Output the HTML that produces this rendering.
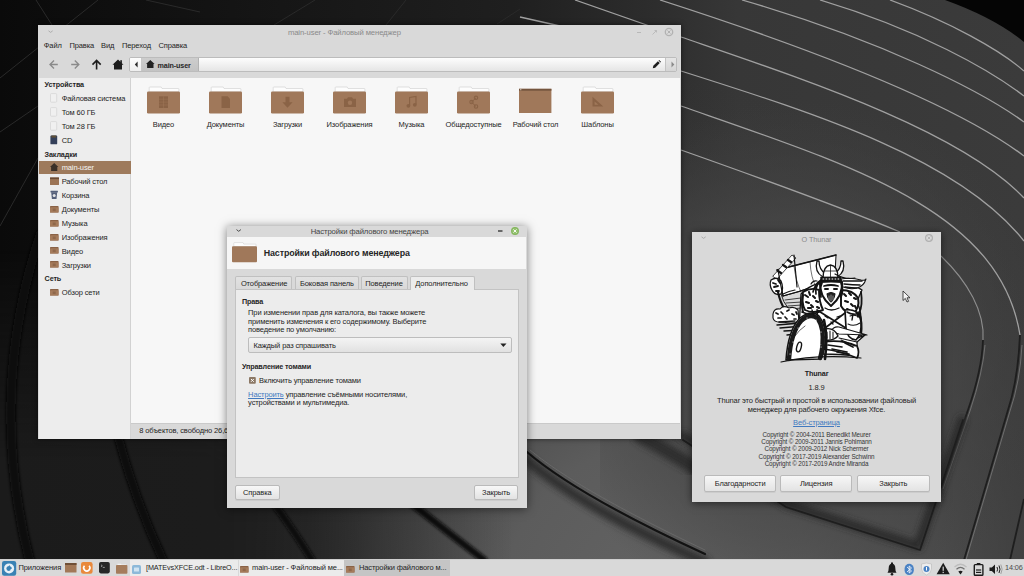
<!DOCTYPE html>
<html><head><meta charset="utf-8">
<style>
*{margin:0;padding:0;box-sizing:border-box}
html,body{width:1024px;height:576px;overflow:hidden;background:#111}
body{position:relative;font-family:"Liberation Sans",sans-serif;font-size:7.5px;letter-spacing:-0.12px;color:#242424}
.a{position:absolute}
.t{position:absolute;white-space:nowrap;line-height:10px}
svg{position:absolute;overflow:visible}
.btn{position:absolute;border:1px solid #bababa;border-radius:2px;background:linear-gradient(#f7f7f7,#e3e3e3);box-shadow:0 1px 0 rgba(0,0,0,.06)}
.lnk{color:#4279c0;text-decoration:underline}
</style></head><body>

<svg id="wall" width="1024" height="576" viewBox="0 0 1024 576" style="left:0;top:0">
  <defs>
    <linearGradient id="bg" x1="0" y1="0" x2="1024" y2="0" gradientUnits="userSpaceOnUse">
      <stop offset="0" stop-color="#0a0a0a"/>
      <stop offset="0.06" stop-color="#0d0d0d"/>
      <stop offset="0.25" stop-color="#151515"/>
      <stop offset="0.5" stop-color="#1f1f1f"/>
      <stop offset="0.64" stop-color="#2d2d2d"/>
      <stop offset="0.72" stop-color="#373737"/>
      <stop offset="1" stop-color="#3b3b3b"/>
    </linearGradient>
    <radialGradient id="br" cx="660" cy="600" r="520" gradientUnits="userSpaceOnUse">
      <stop offset="0" stop-color="#636363"/>
      <stop offset="0.3" stop-color="#5c5c5c"/>
      <stop offset="0.55" stop-color="#4e4e4e" stop-opacity="0.85"/>
      <stop offset="0.8" stop-color="#404040" stop-opacity="0.35"/>
      <stop offset="1" stop-color="#3a3a3a" stop-opacity="0"/>
    </radialGradient>
    <linearGradient id="lb" x1="0" y1="0" x2="1024" y2="0" gradientUnits="userSpaceOnUse">
      <stop offset="0" stop-color="#1b1b1b"/>
      <stop offset="0.2" stop-color="#1c1c1c" stop-opacity="1"/>
      <stop offset="0.3" stop-color="#222" stop-opacity="0.8"/>
      <stop offset="0.5" stop-color="#333" stop-opacity="0"/>
    </linearGradient>
    <linearGradient id="lbv" x1="0" y1="250" x2="0" y2="460" gradientUnits="userSpaceOnUse">
      <stop offset="0" stop-color="#fff" stop-opacity="0"/>
      <stop offset="1" stop-color="#fff" stop-opacity="1"/>
    </linearGradient>
    <mask id="lbm" maskUnits="userSpaceOnUse" x="0" y="0" width="1024" height="576"><rect x="0" y="250" width="520" height="326" fill="url(#lbv)"/></mask>
    <radialGradient id="mid" cx="800" cy="360" r="260" gradientUnits="userSpaceOnUse">
      <stop offset="0" stop-color="#4c4c4c" stop-opacity="1"/>
      <stop offset="0.55" stop-color="#474747" stop-opacity="0.7"/>
      <stop offset="1" stop-color="#404040" stop-opacity="0"/>
    </radialGradient>
    <filter id="bl1" x="-20%" y="-20%" width="140%" height="140%"><feGaussianBlur stdDeviation="1.6"/></filter>
    <filter id="bl2" x="-20%" y="-20%" width="140%" height="140%"><feGaussianBlur stdDeviation="3"/></filter>
  </defs>
  <rect width="1024" height="576" fill="url(#bg)"/>
  <rect x="0" y="0" width="1024" height="576" fill="url(#br)"/>
  <rect x="0" y="250" width="520" height="326" fill="url(#lb)" mask="url(#lbm)"/>
  <rect x="600" y="100" width="424" height="476" fill="url(#mid)"/>
  <g fill="none" stroke="#2a2a2a" stroke-width="1">
    <path d="M36 0 L52 25"/>
    <path d="M98 0 L0 78"/>
    <path d="M0 132 L38 106"/>
    <path d="M0 226 L38 158"/>
    <path d="M146 0 L200 12"/>
    <path d="M315 0 L274 25"/>
    <path d="M406 0 L386 25"/>
    <path d="M520 9 L497 24"/>
  </g>
  <!-- black corner top right -->
  <path d="M945 0 Q995 18 1024 42 L1024 0 Z" fill="#050505"/>
  <!-- light curves top right -->
  <g fill="none" stroke="#a0a0a0" stroke-width="1.3">
    <path d="M890 0 C950 22 1000 50 1024 71"/>
    <path d="M820 0 C920 30 990 70 1024 96"/>
    <path d="M742 0 C880 40 980 90 1024 122"/>
    <path d="M660 0 C800 45 950 100 1024 156"/>
    <path d="M575 0 L681 37 C800 78 960 130 1024 198"/>
    <path d="M681 71 C820 115 960 160 1024 241"/>
    <path d="M681 106 C850 165 1000 210 1020 335"/>
    <path d="M681 150 C780 185 860 215 900 232"/>
    <path d="M520 17 L560 26"/>
  </g>
  <g fill="none" stroke="#8e8e8e" stroke-width="1.1">
    <path d="M941 256 C968 282 985 312 983 340"/>
  </g>
  <g fill="none" stroke="#1e1e1e" stroke-width="1.8">
    <path d="M983 340 Q982 370 968 410 L941 488"/>
    <path d="M1020 335 Q1018 380 1008 410 L964 560"/>
    <path d="M1024 499 L1010 560"/>
  </g>
  <g fill="none" stroke="#7a7a7a" stroke-width="0.8">
    <path d="M985 345 Q983 372 970 411 L943 489"/>
    <path d="M1022 345 Q1020 382 1010 411 L966 560"/>
  </g>
  <!-- dark bands bottom left -->
  <g fill="none" stroke="#070707" stroke-linecap="round" filter="url(#bl1)">
    <path d="M40 235 C12 320 -4 430 30 562" stroke-width="10"/>
    <path d="M118 436 Q135 500 163 560" stroke-width="9"/>
  </g>
  <g fill="none" stroke="#111" stroke-linecap="round" filter="url(#bl1)">
    <path d="M274 504 Q292 528 312 560" stroke-width="7"/>
    <path d="M412 504 Q445 530 484 560" stroke-width="7"/>
  </g>
  <g fill="none" stroke-linecap="round">
    <path d="M524 458 C560 488 610 520 705 562" stroke="#2e2e2e" stroke-width="10" filter="url(#bl2)"/>
    <path d="M527 452 C555 476 605 508 705 554" stroke="#121212" stroke-width="2.2"/>
    <path d="M530 450 C558 473 608 504 705 550" stroke="#6a6a6a" stroke-width="0.9"/>
    <path d="M640 436 Q670 452 695 468" stroke="#2e2e2e" stroke-width="14" filter="url(#bl2)"/>
    <path d="M683 436 L786 504 L918 546 L962 420" stroke="#2c2c2c" stroke-width="9" stroke-linejoin="round" filter="url(#bl2)"/>
    <path d="M683 440 L786 507 L920 550 L963 420" stroke="#1e1e1e" stroke-width="1.8" stroke-linejoin="round"/>
  </g>
</svg>

<svg width="0" height="0" style="position:absolute">
  <defs>
    <g id="folder">
      <path d="M2.2 6 L2.2 1.6 Q2.2 1 2.9 1 L14.2 1 L15 2.5 L31.3 2.5 Q31.9 2.5 31.9 3.1 L31.9 6 Z" fill="#fdfdfd" stroke="#cfcfcf" stroke-width="0.6"/>
      <rect x="0" y="5.6" width="33" height="21.8" rx="1.2" fill="#a0785a"/>
    </g>
    <g id="sfold">
      <rect x="0" y="1" width="8.5" height="6.5" rx="0.6" fill="#8a6246"/>
      <rect x="0" y="2.3" width="8.5" height="5.2" rx="0.5" fill="#a57b5b"/>
      <rect x="2.7" y="3.5" width="3" height="2.6" fill="#7e5a3e" opacity=".55"/>
    </g>
  </defs>
</svg>

<div class="a" style="left:38px;top:25px;width:643px;height:413.5px;background:#d9d9d9;box-shadow:0 0 5px rgba(0,0,0,.55)">
<svg width="6" height="4" style="left:9.50px;top:5.00px"><path d="M0.5 0.8 L2.6 2.4 L4.7 0.8" fill="none" stroke="#a8a8a8" stroke-width="0.9"/></svg>
<div class="t" style="left:249.90px;top:3.00px;font-size:7.7px;color:#8a8a8a">main-user - Файловый менеджер</div>
<svg width="44" height="12" style="left:596.00px;top:1.00px"><path d="M3 6.5 L7 6.5" stroke="#b8b8b8" stroke-width="1"/><path d="M18.5 8.5 L22.5 4.5 M20.5 4.5 L22.5 4.5 L22.5 6.5" fill="none" stroke="#b8b8b8" stroke-width="0.9"/><circle cx="35" cy="6" r="3.7" fill="none" stroke="#b2b2b2" stroke-width="1.3"/><path d="M33.5 4.5 L36.5 7.5 M36.5 4.5 L33.5 7.5" stroke="#b2b2b2" stroke-width="1"/></svg>
<div class="t" style="left:5.75px;top:16.00px">Файл</div>
<div class="t" style="left:31.50px;top:16.00px">Правка</div>
<div class="t" style="left:63.00px;top:16.00px">Вид</div>
<div class="t" style="left:84.00px;top:16.00px">Переход</div>
<div class="t" style="left:120.50px;top:16.00px">Справка</div>
<svg width="84" height="14" style="left:10.00px;top:33.00px"><path d="M2.5 6.5 L9.8 6.5 M6 2.6 L2 6.5 L6 10.4" fill="none" stroke="#8a8a8a" stroke-width="1.35"/><path d="M23.2 6.5 L30.8 6.5 M26.8 2.6 L30.8 6.5 L26.8 10.4" fill="none" stroke="#8a8a8a" stroke-width="1.35"/><path d="M48.6 11.5 L48.6 2.6 M44.5 6.6 L48.6 2.5 L52.7 6.6" fill="none" stroke="#1c1c1c" stroke-width="1.6"/><path d="M64.5 6.8 L70 1.6 L75.5 6.8 L74 6.8 L74 11.6 L66 11.6 L66 6.8 Z" fill="#1c1c1c"/><rect x="72.3" y="2.2" width="1.6" height="3.2" fill="#1c1c1c"/></svg>
<div class="a" style="left:90.50px;top:32.00px;width:548.00px;height:15.00px;border:1px solid #bcbcbc;border-radius:2px;background:linear-gradient(#fdfdfd,#e5e5e5);overflow:hidden"><div class="a" style="left:0;top:0;width:12.5px;height:13px;background:linear-gradient(#fdfdfd,#eeeeee);border-right:1px solid #c8c8c8"></div><svg width="6" height="8" style="left:4.5px;top:3px"><path d="M3.6 0.6 L0.8 3.5 L3.6 6.4 Z" fill="#2a2a2a"/></svg><div class="a" style="left:12.5px;top:0;width:56.5px;height:13px;background:linear-gradient(#cdcdcd,#c3c3c3);border-right:1px solid #b3b3b3"></div><svg width="9" height="9" style="left:16.8px;top:2.3px"><path d="M0 4 L4.3 0 L8.6 4 L7.5 4 L7.5 8 L1.1 8 L1.1 4 Z" fill="#222"/></svg><div class="a" style="left:535px;top:0;width:12px;height:13px;background:linear-gradient(#e6e6e6,#d5d5d5);border-left:1px solid #c4c4c4"></div><svg width="6" height="8" style="left:540px;top:3px"><path d="M1.5 0.6 L4.3 3.5 L1.5 6.4 Z" fill="#8a8a8a"/></svg><svg width="9" height="9" style="left:522.5px;top:2.2px"><path d="M0.8 8.2 L1.3 5.8 L5.9 1.2 L7.8 3.1 L3.2 7.7 Z M6.5 0.6 L7.2 0 L9 1.8 L8.4 2.5 Z" fill="#1e1e1e"/></svg></div>
<div class="t" style="left:119.50px;top:36.00px;font-size:7.2px;font-weight:bold;color:#262626">main-user</div>
<div class="a" style="left:1.00px;top:52.50px;width:91.50px;height:361.00px;background:#ededed;border-right:1px solid #d2d2d2"></div>
<div class="a" style="left:1.00px;top:136.00px;width:91.50px;height:13.00px;background:#9e7a5c"></div>
<div class="t" style="left:6.60px;top:55.00px;font-size:7.2px;font-weight:bold;color:#262626">Устройства</div>
<div class="t" style="left:23.70px;top:69.00px">Файловая система</div>
<svg width="9" height="10" style="left:12.30px;top:68.30px"><rect x="0.5" y="0.6" width="6.2" height="8.6" rx="0.9" fill="#f0f0f0" stroke="#d6d6d6" stroke-width="0.8"/></svg>
<div class="t" style="left:23.70px;top:83.00px">Том 60 ГБ</div>
<svg width="9" height="10" style="left:12.30px;top:82.30px"><rect x="0.5" y="0.6" width="6.2" height="8.6" rx="0.9" fill="#f0f0f0" stroke="#d6d6d6" stroke-width="0.8"/></svg>
<div class="t" style="left:23.70px;top:97.00px">Том 28 ГБ</div>
<svg width="9" height="10" style="left:12.30px;top:96.30px"><rect x="0.5" y="0.6" width="6.2" height="8.6" rx="0.9" fill="#f0f0f0" stroke="#d6d6d6" stroke-width="0.8"/></svg>
<div class="t" style="left:23.70px;top:111.00px">CD</div>
<svg width="9" height="10" style="left:12.20px;top:110.30px"><rect x="0.4" y="0.5" width="6.8" height="8.8" rx="0.9" fill="#34405a"/><rect x="1.4" y="0.5" width="4.8" height="2.1" fill="#5f5038"/></svg>
<div class="t" style="left:6.60px;top:124.50px;font-size:7.2px;font-weight:bold;color:#262626">Закладки</div>
<div class="t" style="left:23.70px;top:138.00px;color:#f4f4f4">main-user</div>
<svg width="9" height="9" style="left:12.00px;top:137.80px"><path d="M0 4 L4.2 0 L8.4 4 L7.3 4 L7.3 8 L1.1 8 L1.1 4 Z" fill="#3a3028"/></svg>
<div class="t" style="left:23.70px;top:152.00px">Рабочий стол</div>
<svg width="10" height="9" style="left:11.50px;top:151.80px"><rect x="0" y="0.5" width="9" height="7.6" rx="0.5" fill="#9c7455"/><rect x="0" y="0.5" width="9" height="1.6" fill="#6c4c35"/></svg>
<div class="t" style="left:23.70px;top:166.00px">Корзина</div>
<svg width="9" height="10" style="left:12.00px;top:165.30px"><path d="M1.2 2.2 L7.2 2.2 L6.5 9 L1.9 9 Z" fill="#56607a"/><rect x="0.5" y="0.8" width="7.4" height="1.6" rx="0.3" fill="#56607a"/><circle cx="4.2" cy="5.6" r="1.5" fill="#e4e4e4"/></svg>
<div class="t" style="left:23.70px;top:180.00px">Документы</div>
<svg width="10" height="9" style="left:11.50px;top:179.80px"><use href="#sfold"/></svg>
<div class="t" style="left:23.70px;top:194.00px">Музыка</div>
<svg width="10" height="9" style="left:11.50px;top:193.80px"><use href="#sfold"/></svg>
<div class="t" style="left:23.70px;top:208.00px">Изображения</div>
<svg width="10" height="9" style="left:11.50px;top:207.80px"><use href="#sfold"/></svg>
<div class="t" style="left:23.70px;top:221.50px">Видео</div>
<svg width="10" height="9" style="left:11.50px;top:221.30px"><use href="#sfold"/></svg>
<div class="t" style="left:23.70px;top:235.50px">Загрузки</div>
<svg width="10" height="9" style="left:11.50px;top:235.30px"><use href="#sfold"/></svg>
<div class="t" style="left:6.60px;top:249.00px;font-size:7.2px;font-weight:bold;color:#262626">Сеть</div>
<div class="t" style="left:23.70px;top:263.00px">Обзор сети</div>
<svg width="10" height="9" style="left:11.50px;top:262.80px"><use href="#sfold"/></svg>
<div class="a" style="left:93.00px;top:52.50px;width:549.00px;height:345.30px;background:#f7f7f7"></div>
<svg width="33" height="28" style="left:109.00px;top:60.50px"><use href="#folder"/><rect x="12" y="10.3" width="9" height="11.7" fill="#8a6346"/><path d="M12 13.2 H21 M12 16.1 H21 M12 19 H21 M16.5 10.3 V22" stroke="#a0785a" stroke-width="0.45"/></svg>
<div class="t" style="left:85.00px;top:95.00px;width:81.00px;text-align:center">Видео</div>
<svg width="33" height="28" style="left:171.00px;top:60.50px"><use href="#folder"/><path d="M12.5 10.3 L18.6 10.3 L21 12.8 L21 22 L12.5 22 Z" fill="#8a6346"/></svg>
<div class="t" style="left:147.00px;top:95.00px;width:81.00px;text-align:center">Документы</div>
<svg width="33" height="28" style="left:233.00px;top:60.50px"><use href="#folder"/><path d="M14.5 10.8 H18.5 V16.2 H21.6 L16.5 21.8 L11.4 16.2 H14.5 Z" fill="#8a6346"/></svg>
<div class="t" style="left:209.00px;top:95.00px;width:81.00px;text-align:center">Загрузки</div>
<svg width="33" height="28" style="left:295.00px;top:60.50px"><use href="#folder"/><path d="M11 12.8 H14 L15 11.2 H19 L20 12.8 H23 V21 H11 Z" fill="#8a6346"/><circle cx="17" cy="16.8" r="2.2" fill="#a0785a"/></svg>
<div class="t" style="left:271.00px;top:95.00px;width:81.00px;text-align:center">Изображения</div>
<svg width="33" height="28" style="left:357.00px;top:60.50px"><use href="#folder"/><path d="M14.6 19.6 V11.4 L21 10.4 V18.6" fill="none" stroke="#8a6346" stroke-width="1.2"/><circle cx="13.4" cy="19.8" r="1.9" fill="#8a6346"/><circle cx="19.8" cy="18.8" r="1.9" fill="#8a6346"/></svg>
<div class="t" style="left:333.00px;top:95.00px;width:81.00px;text-align:center">Музыка</div>
<svg width="33" height="28" style="left:419.00px;top:60.50px"><use href="#folder"/><path d="M19 11.8 L14.5 16.1 L19 20.5" fill="none" stroke="#8a6346" stroke-width="1"/><circle cx="19" cy="11.8" r="1.7" fill="none" stroke="#8a6346" stroke-width="1.1"/><circle cx="14.5" cy="16.1" r="1.7" fill="none" stroke="#8a6346" stroke-width="1.1"/><circle cx="19" cy="20.5" r="1.7" fill="none" stroke="#8a6346" stroke-width="1.1"/></svg>
<div class="t" style="left:395.00px;top:95.00px;width:81.00px;text-align:center">Общедоступные</div>
<svg width="33" height="28" style="left:480.80px;top:60.50px"><rect x="0" y="2.8" width="32.4" height="24.2" fill="#a0785a"/><rect x="0" y="2.8" width="32.4" height="1.9" fill="#74553e"/><rect x="1.2" y="3.2" width="1.1" height="1" fill="#e8dccf"/></svg>
<div class="t" style="left:457.00px;top:95.00px;width:81.00px;text-align:center">Рабочий стол</div>
<svg width="33" height="28" style="left:543.00px;top:60.50px"><use href="#folder"/><path d="M11.5 10.8 L11.5 20.6 L22.3 20.6 Z M13.6 15.6 L13.6 18.8 L17.4 18.8 Z" fill="#8a6346" fill-rule="evenodd"/></svg>
<div class="t" style="left:519.00px;top:95.00px;width:81.00px;text-align:center">Шаблоны</div>
<div class="a" style="left:93.00px;top:397.80px;width:549.00px;height:15.70px;background:#d9d9d9;border-top:1px solid #cacaca"></div>
<div class="t" style="left:101.30px;top:401.00px">8 объектов, свободно 26,6 ГБ</div>
</div>
<div class="a" style="left:227px;top:226px;width:300px;height:282px;background:#d9d9d9;box-shadow:0 1px 9px rgba(0,0,0,.5)">
<svg width="6" height="4" style="left:8.50px;top:3.00px"><path d="M0.5 0.6 L2.7 2.3 L4.9 0.6" fill="none" stroke="#4a4a4a" stroke-width="1"/></svg>
<div class="t" style="left:83.70px;top:1.00px;font-size:7.7px;color:#444">Настройки файлового менеджера</div>
<svg width="26" height="10" style="left:269.00px;top:-0.50px"><path d="M2 5 L6.5 5" stroke="#2a2a2a" stroke-width="1.3"/><circle cx="19" cy="5" r="3.9" fill="#93c26d"/><circle cx="19" cy="5" r="3.6" fill="none" stroke="#7bab57" stroke-width="0.6"/><path d="M17.4 3.4 L20.6 6.6 M20.6 3.4 L17.4 6.6" stroke="#f6faf2" stroke-width="1"/></svg>
<div class="a" style="left:0.00px;top:11.00px;width:298.50px;height:31.60px;background:#f6f6f6"></div>
<svg width="26" height="21" style="left:4.80px;top:15.50px"><path d="M1.8 4.5 L1.8 1.3 Q1.8 0.6 2.5 0.6 L11 0.6 L11.8 2.1 L23.4 2.1 Q24 2.1 24 2.7 L24 4.5 Z" fill="#fdfdfd" stroke="#d0d0d0" stroke-width="0.6"/><rect x="0" y="4.2" width="25" height="16" rx="1" fill="#a0785a"/></svg>
<div class="t" style="left:36.75px;top:22.00px;font-size:8.9px;font-weight:bold;color:#262626">Настройки файлового менеджера</div>
<div class="a" style="left:7.80px;top:50.40px;width:57.60px;height:13.60px;border:1px solid #c0c0c0;border-bottom:none;border-radius:2px 2px 0 0;background:linear-gradient(#e2e2e2,#d8d8d8)"></div>
<div class="t" style="left:13.90px;top:53.00px">Отображение</div>
<div class="a" style="left:67.60px;top:50.40px;width:64.00px;height:13.60px;border:1px solid #c0c0c0;border-bottom:none;border-radius:2px 2px 0 0;background:linear-gradient(#e2e2e2,#d8d8d8)"></div>
<div class="t" style="left:73.00px;top:53.00px">Боковая панель</div>
<div class="a" style="left:133.70px;top:50.40px;width:47.60px;height:13.60px;border:1px solid #c0c0c0;border-bottom:none;border-radius:2px 2px 0 0;background:linear-gradient(#e2e2e2,#d8d8d8)"></div>
<div class="t" style="left:138.30px;top:53.00px">Поведение</div>
<div class="a" style="left:8.00px;top:63.40px;width:283.50px;height:189.00px;border:1px solid #c3c3c3;background:#ececec"></div>
<div class="a" style="left:183.30px;top:50.20px;width:65.20px;height:14.30px;border:1px solid #c0c0c0;border-bottom:none;border-radius:2px 2px 0 0;background:#ececec"></div>
<div class="t" style="left:188.30px;top:53.00px">Дополнительно</div>
<div class="t" style="left:14.90px;top:71.00px;font-size:7.2px;font-weight:bold;color:#262626">Права</div>
<div class="t" style="left:21.10px;top:82.00px">При изменении прав для каталога, вы также можете</div>
<div class="t" style="left:21.10px;top:90.50px">применить изменения к его содержимому. Выберите</div>
<div class="t" style="left:21.10px;top:99.00px">поведение по умолчанию:</div>
<div class="a" style="left:21.10px;top:111.30px;width:263.50px;height:15.70px;border:1px solid #bdbdbd;border-radius:2px;background:linear-gradient(#f4f4f4,#e1e1e1)"></div>
<div class="t" style="left:26.40px;top:115.00px">Каждый раз спрашивать</div>
<svg width="8" height="6" style="left:273.00px;top:116.50px"><path d="M0.3 0.6 L6.5 0.6 L3.4 3.9 Z" fill="#222"/></svg>
<div class="t" style="left:14.90px;top:136.20px;font-size:7.2px;font-weight:bold;color:#262626">Управление томами</div>
<svg width="8" height="8" style="left:21.80px;top:150.50px"><rect x="0" y="0" width="6.8" height="6.8" rx="1" fill="#8c7865"/><path d="M2 2 L4.8 4.8 M4.8 2 L2 4.8" stroke="#fff" stroke-width="1"/></svg>
<div class="t" style="left:32.00px;top:149.50px">Включить управление томами</div>
<div class="t" style="left:21.10px;top:163.80px"><span class="lnk">Настроить</span> управление съёмными носителями,</div>
<div class="t" style="left:21.10px;top:172.00px">устройствами и мультимедиа.</div>
<div class="btn" style="left:8px;top:259px;width:44.5px;height:14.8px"></div>
<div class="t" style="left:8.00px;top:262.00px;width:44.50px;text-align:center">Справка</div>
<div class="btn" style="left:246.8px;top:259px;width:44.6px;height:14.8px"></div>
<div class="t" style="left:246.80px;top:262.00px;width:44.60px;text-align:center">Закрыть</div>
</div>
<div class="a" style="left:692px;top:232px;width:249px;height:270px;background:#d9d9d9;box-shadow:0 1px 8px rgba(0,0,0,.55)">
<svg width="6" height="4" style="left:9.00px;top:3.50px"><path d="M0.5 0.8 L2.6 2.4 L4.7 0.8" fill="none" stroke="#a8a8a8" stroke-width="0.9"/></svg>
<div class="t" style="left:0.00px;top:3.00px;font-size:7.3px;color:#8a8a8a;width:249.00px;text-align:center">О Thunar</div>
<svg width="10" height="10" style="left:232.00px;top:1.00px"><circle cx="5" cy="5" r="3.4" fill="none" stroke="#b0b0b0" stroke-width="1.2"/><path d="M3.6 3.6 L6.4 6.4 M6.4 3.6 L3.6 6.4" stroke="#b0b0b0" stroke-width="0.9"/></svg>
<svg width="105" height="115" viewBox="0 0 105 115" style="left:73px;top:18px">
  <g stroke="#141414" stroke-linejoin="round" stroke-linecap="round" fill="none">
    <!-- sail -->
    <path d="M12 20 L71 5 L70 24 Q60 30 50 36 Q34 42 18 46 Q15 33 12 20 Z" fill="#fff" stroke-width="1.04"/>
    <path d="M12 20 L71 5" stroke-width="1.56"/>
    <path d="M29 16 Q31 32 36 42 M45 12 Q46 28 51 37" stroke-width="0.59"/>
    <path d="M18 46 Q34 42 50 36" stroke-width="1.04"/>
    <!-- flag & mast -->
    <path d="M8 26 L27 5 L31 8 L12 29 Z" fill="#fff" stroke-width="0.78"/>
    <path d="M13 21 L16 23 M18 15 L21 17 M23 10 L26 12" stroke-width="2.34"/>
    <path d="M29 5 L32 37" stroke-width="1.17"/>
    <!-- dragon head + hull -->
    <path d="M6 30 Q12 26 16 31 Q19 38 16 44 Q10 46 7 40 Q4 35 6 30 Z" fill="#fff" stroke-width="1.30"/>
    <path d="M8 33 l3 1 M9 37 l4 -1 M11 41 l3 0 M13 30 l2 3" stroke-width="1.82"/>
    <path d="M13 42 Q15 52 20 60 Q23 64 28 66" stroke-width="2.08"/>
    <path d="M16 44 Q18 52 23 58" stroke-width="0.91"/>
    <path d="M20 50 L36 48 M21 53 L37 52 M23 56 L37 55 M25 59 L37 58" stroke-width="0.78"/>
    <!-- clouds -->
    <path d="M8 64 Q9 58 15 59 Q18 55 24 58 Q29 56 33 60 L34 72 Q26 74 18 72 Q9 73 8 68 Z" fill="#fff" stroke-width="1.17"/>
    <path d="M11 63 l2 1 M16 62 l2 2 M22 61 l2 -1 M27 64 l2 1 M13 68 l3 0 M20 67 l2 2 M29 69 l2 0 M31 62 l1 2" stroke-width="1.69"/>
    <!-- water streaks -->
    <path d="M12 75 L36 73 M15 78 L38 76 M19 81 L37 80 M22 85 L38 83 M26 88 L38 87 M14 72 L30 71" stroke-width="1.43"/>
    <!-- body silhouette -->
    <path d="M36 44 Q44 36 52 34 L76 32 Q88 34 97 40 Q94 46 92 52 Q97 62 96 76 Q95 84 93 88 L100 85 L92 92 Q92 100 93 106 Q75 104 58 104 Q44 103 34 96 Q34 70 36 44 Z" fill="#fff" stroke-width="1.30"/>
    <!-- fur shoulders dark texture -->
    <path d="M38 42 Q46 37 54 40 Q54 52 58 60 Q48 64 40 60 Q36 52 38 42 Z" fill="#fff" stroke-width="1.95"/>
    <path d="M40 45 l3 2 M44 42 l1 3 M48 46 l2 2 M41 52 l3 1 M46 55 l2 2 M51 51 l2 1 M43 58 l3 0 M52 57 l2 1" stroke-width="2.08"/>
    <path d="M76 40 Q88 40 93 48 Q95 58 88 64 Q80 63 76 56 Z" fill="#fff" stroke-width="1.95"/>
    <path d="M79 44 l2 2 M84 43 l2 2 M89 48 l2 1 M80 51 l3 1 M86 54 l2 2 M90 56 l1 2 M82 59 l2 1" stroke-width="2.08"/>
    <!-- hair -->
    <path d="M76 29 Q86 27 96 30 Q100 31 101 29 Q99 36 92 38 Q86 40 78 37 Z" fill="#fff" stroke-width="1.04"/>
    <path d="M78 31 Q88 31 97 31 M79 34 Q88 35 95 35 M80 37 Q87 38 92 38" stroke-width="1.56"/>
    <path d="M56 30 Q50 34 48 42 M54 32 Q50 38 51 44" stroke-width="1.69"/>
    <!-- horns -->
    <path d="M52 11 Q49 22 58 27 L61 24 Q54 20 54 11 Z" fill="#fff" stroke-width="1.30"/>
    <path d="M78 11 Q81 22 72 27 L69 24 Q76 20 76 11 Z" fill="#fff" stroke-width="1.30"/>
    <!-- helmet -->
    <path d="M58 28 Q58 16 65.5 15 Q73 16 73 28 Z" fill="#fff" stroke-width="1.43"/>
    <path d="M65.5 15.5 L65.5 28 M60 21 L71 21" stroke-width="0.78"/>
    <rect x="56" y="27" width="20" height="4" fill="#151515" stroke-width="0.78"/>
    <path d="M58 29 h0.8 M61 29 h0.8 M64 29 h0.8 M67 29 h0.8 M70 29 h0.8 M73 29 h0.8" stroke="#fff" stroke-width="1"/>
    <!-- face & beard -->
    <path d="M55 32 Q66 31 77 32 Q78 46 66 56 Q54 46 55 32 Z" fill="#fff" stroke-width="2.08"/>
    <path d="M59 36 Q66 34 73 36" stroke-width="1.82"/>
    <path d="M60 39 l3 0 M69 39 l3 0" stroke-width="1.95"/>
    <path d="M62 44 Q66 41 70 44 Q69 50 66 52 Q63 50 62 44 Z" fill="#222" stroke-width="1.04"/>
    <path d="M64 46 l0 4 M66 45 l0 6 M68 46 l0 4" stroke="#fff" stroke-width="0.5"/>
    <!-- torso straps -->
    <path d="M52 60 L84 80 M84 60 L60 78 M56 82 Q70 77 86 84" stroke-width="1.69"/>
    <path d="M52 66 Q55 74 52 82 M82 64 Q86 72 85 82" stroke-width="1.17"/>
    <path d="M60 66 l3 2 M72 67 l3 -1 M66 72 l2 2" stroke-width="1.30"/>
    <!-- arm -->
    <path d="M80 60 Q94 58 96 72 Q97 84 91 90 Q82 89 81 78 Z" fill="#fff" stroke-width="1.69"/>
    <path d="M83 74 Q89 77 95 73 M85 66 Q90 64 94 67" stroke-width="1.04"/>
    <path d="M94 62 Q98 72 96 86" stroke-width="1.82"/>
    <!-- sword -->
    <path d="M67 80 Q69 76 74 77 L102 85 L74 84 Q68 83 67 80 Z" fill="#fff" stroke-width="1.17"/>
    <!-- belt -->
    <path d="M60 79 Q69 77 73 86 Q68 91 61 90 Z" fill="#fff" stroke-width="1.43"/>
    <path d="M62 82 l0 6 M65 81 l0 8 M68 82 l0 6" stroke-width="1.04"/>
    <!-- lower cloth -->
    <path d="M58 92 Q76 89 92 96 Q95 102 92 108 Q76 101 58 99 Z" fill="#fff" stroke-width="1.69"/>
    <path d="M63 95 l14 2 M67 99 l15 3 M72 102 l12 2 M80 93 l8 4" stroke-width="1.69"/>
    <!-- shield -->
    <path d="M21 110 Q23 80 35 68 Q46 59 54 66 Q62 76 60 94 Q58 106 56 109 Z" fill="#fff" stroke-width="1.56"/>
    <path d="M24 109 Q26 82 36.5 70.5 Q46 62 53 69 Q59 78 57.5 95 Q56.5 104 55 108" stroke="#1a1a1a" stroke-width="4.42"/>
    <path d="M28 92 h0.1 M33 78 h0.1 M42 68 h0.1 M51 70 h0.1 M56 82 h0.1 M56 97 h0.1 M25 104 h0.1" stroke="#fff" stroke-width="1.1"/>
    <ellipse cx="34" cy="97" rx="2.2" ry="5" fill="#fff" stroke-width="1.43" transform="rotate(15 34 97)"/>
    <path d="M59 70 Q63 86 60 109" stroke-width="2.60"/>
    <path d="M30 86 Q34 80 40 76" stroke-width="0.65"/>
    <!-- base line -->
    <path d="M16 112 Q52 104 96 108" stroke-width="1.17"/>
    <!-- extra dark texture -->
    <path d="M57 33 Q54 40 56 47 M76 33 Q79 40 76 47" stroke-width="1.8"/>
    <path d="M37 62 Q45 66 54 62 M82 62 Q88 66 94 63" stroke-width="1.6"/>
    <path d="M47 60 l2 6 M52 62 l1 5 M88 64 l-1 6 M92 62 l1 5" stroke-width="1.4"/>
    <path d="M70 24 Q80 30 90 28 M52 31 Q48 30 46 34" stroke-width="1.2"/>
    <path d="M38 45 Q36 55 38 62" stroke-width="2"/>
    <path d="M96 42 Q98 55 94 64" stroke-width="1.8"/>
    <path d="M74 88 L92 92 M76 90 L90 96" stroke-width="1.2"/>
    <path d="M18 44 Q24 41 30 40" stroke-width="1.2"/>
    <path d="M13 20 Q15 32 18 46" stroke-width="1.2"/>
    <path d="M60 58 Q66 62 74 58" stroke-width="1.3"/>
  </g>
</svg>

<div class="t" style="left:0.00px;top:137.00px;font-size:7.2px;font-weight:bold;color:#222;width:249.00px;text-align:center">Thunar</div>
<div class="t" style="left:0.00px;top:151.00px;width:249.00px;text-align:center">1.8.9</div>
<div class="t" style="left:0.00px;top:164.00px;width:249.00px;text-align:center">Thunar это быстрый и простой в использовании файловый</div>
<div class="t" style="left:0.00px;top:173.00px;width:249.00px;text-align:center">менеджер для рабочего окружения Xfce.</div>
<div class="t" style="left:0.00px;top:185.50px;width:249.00px;text-align:center"><span class="lnk">Веб-страница</span></div>
<div class="t" style="left:0.00px;top:197.50px;font-size:6.3px;color:#333;width:249.00px;text-align:center">Copyright © 2004-2011 Benedikt Meurer</div>
<div class="t" style="left:0.00px;top:204.95px;font-size:6.3px;color:#333;width:249.00px;text-align:center">Copyright © 2009-2011 Jannis Pohlmann</div>
<div class="t" style="left:0.00px;top:212.40px;font-size:6.3px;color:#333;width:249.00px;text-align:center">Copyright © 2009-2012 Nick Schermer</div>
<div class="t" style="left:0.00px;top:219.85px;font-size:6.3px;color:#333;width:249.00px;text-align:center">Copyright © 2017-2019 Alexander Schwinn</div>
<div class="t" style="left:0.00px;top:227.30px;font-size:6.3px;color:#333;width:249.00px;text-align:center">Copyright © 2017-2019 Andre Miranda</div>
<div class="btn" style="left:11.9px;top:242.5px;width:72.4px;height:17.2px"></div>
<div class="t" style="left:11.90px;top:247.00px;width:72.40px;text-align:center">Благодарности</div>
<div class="btn" style="left:88.0px;top:242.5px;width:72.4px;height:17.2px"></div>
<div class="t" style="left:88.00px;top:247.00px;width:72.40px;text-align:center">Лицензия</div>
<div class="btn" style="left:164.7px;top:242.5px;width:73.3px;height:17.2px"></div>
<div class="t" style="left:164.70px;top:247.00px;width:73.30px;text-align:center">Закрыть</div>
</div>
<div class="a" style="left:0;top:558.5px;width:1024px;height:17.5px;background:#d9d9d9;border-top:1px solid #cfcfcf">
<svg width="15" height="15" style="left:2.00px;top:1.50px"><rect x="0" y="0" width="14.2" height="14.8" rx="2.2" fill="#3a82b4"/><circle cx="7.1" cy="7.4" r="5" fill="#e9f1f7"/><path d="M4.3 7.2 Q4.6 5.2 6.8 5 L7.4 4 L8 5.2 Q9.6 5.8 10 7.4 L8.8 7.9 Q8.6 9.8 6.6 9.9 Q4.5 9.7 4.3 7.2 Z" fill="#3a82b4"/></svg>
<div class="t" style="left:18.40px;top:3.80px">Приложения</div>
<svg width="12" height="10" style="left:64.50px;top:3.50px"><rect x="0" y="0" width="11.5" height="9.6" rx="0.6" fill="#a27858"/><rect x="0" y="0" width="11.5" height="2" fill="#6f4f37"/></svg>
<svg width="12" height="12" style="left:81.00px;top:2.80px"><rect x="0" y="0" width="11.6" height="11.8" rx="2.2" fill="#e9893c"/><path d="M3.5 3.8 A3.1 3.1 0 1 0 8.1 3.8" fill="none" stroke="#fff" stroke-width="1.6"/></svg>
<svg width="12" height="12" style="left:99.00px;top:2.80px"><rect x="0" y="0" width="10.8" height="11.4" rx="1.8" fill="#272727"/><path d="M2 2.8 L3.3 3.8 L2 4.8 M3.8 5.4 L5.8 5.4" stroke="#ddd" stroke-width="0.6" fill="none"/></svg>
<svg width="12" height="11" style="left:115.70px;top:3.50px"><path d="M1.5 2 L1.5 0.8 L4.8 0.8 L5.5 1.6 L10 1.6 L10 2.5 Z" fill="#f2f2f2"/><rect x="0" y="2" width="11.4" height="8.8" rx="0.8" fill="#a57c5c"/></svg>
<div class="a" style="left:130.00px;top:0.50px;width:107.50px;height:17.00px;background:#ebebeb"></div>
<svg width="10" height="10" style="left:132.00px;top:5.00px"><rect x="0" y="0" width="9" height="9" rx="1.6" fill="#8db9d9"/><rect x="2" y="2.4" width="5" height="4.2" rx="0.5" fill="#d0e4f2"/></svg>
<div class="t" style="left:146.00px;top:3.80px;font-size:7.25px">[MATEvsXFCE.odt - LibreO...</div>
<div class="a" style="left:237.50px;top:0.50px;width:106.90px;height:17.00px;background:#ebebeb;border-left:1px solid #d8d8d8"></div>
<svg width="10" height="9" style="left:240.00px;top:5.00px"><use href="#sfold"/></svg>
<div class="t" style="left:252.00px;top:3.80px">main-user - Файловый ме...</div>
<div class="a" style="left:344.40px;top:0.50px;width:105.60px;height:17.00px;background:#c5c5c5"></div>
<svg width="10" height="9" style="left:345.80px;top:5.00px"><use href="#sfold"/></svg>
<div class="t" style="left:359.00px;top:3.80px">Настройки файлового м...</div>
<svg width="140" height="18" style="left:884.00px;top:0.00px"><path d="M3.5 12.8 Q4.7 11.2 4.7 8 Q4.7 4.2 8 3.6 Q11.3 4.2 11.3 8 Q11.3 11.2 12.5 12.8 Z" fill="#1c1c1c"/><rect x="7" y="2.5" width="2" height="1.6" fill="#1c1c1c"/><circle cx="8" cy="14.2" r="1.3" fill="#1c1c1c"/><rect x="20.6" y="3.8" width="9.2" height="11.2" rx="4.6" fill="#4a82c4"/><path d="M23 7 L27.5 11 L25.2 13 L25.2 6 L27.5 8 L23 12" fill="none" stroke="#fff" stroke-width="0.8"/><path d="M37.5 4 L42.5 3 L47.5 4 L47.5 9 Q47.5 13 42.5 15 Q37.5 13 37.5 9 Z" fill="#ececec" stroke="#b8b8b8" stroke-width="0.6"/><circle cx="42.5" cy="9" r="3" fill="#4a82c4"/><rect x="42" y="7" width="1" height="3.5" fill="#fff"/><path d="M59.2 2.8 L65.8 14.3 L52.6 14.3 Z" fill="#1c1c1c"/><rect x="58.6" y="6.6" width="1.2" height="4.2" fill="#d9d9d9"/><rect x="58.6" y="11.8" width="1.2" height="1.3" fill="#d9d9d9"/><path d="M70.5 7 Q76.5 1.5 82.5 7" fill="none" stroke="#bdbdbd" stroke-width="1.2"/><path d="M72.5 9.3 Q76.5 5.5 80.5 9.3" fill="none" stroke="#707070" stroke-width="1.2"/><path d="M74.3 11.5 L76.5 14.5 L78.7 11.5 Q76.5 10 74.3 11.5 Z" fill="#1c1c1c"/><rect x="90.3" y="4.6" width="8.6" height="10.6" rx="0.8" fill="none" stroke="#1c1c1c" stroke-width="1.4"/><rect x="92.8" y="3" width="3.6" height="1.7" fill="#1c1c1c"/><rect x="92" y="9.4" width="5.2" height="1.2" fill="#1c1c1c"/><rect x="92" y="11.8" width="5.2" height="1.2" fill="#1c1c1c"/><path d="M105.5 7.5 L107.8 7.5 L111 4.5 L111 14 L107.8 11 L105.5 11 Z" fill="#1c1c1c"/><path d="M113 7 Q114.2 9.2 113 11.5 M115 5.5 Q117 9.2 115 13" fill="none" stroke="#1c1c1c" stroke-width="1"/><path d="M116.8 4.5 Q119.5 9.2 116.8 14" fill="none" stroke="#9a9a9a" stroke-width="0.9"/></svg>
<div class="t" style="left:1005.00px;top:3.80px;font-size:7.3px;color:#4a4a4a">14:06</div>
</div>
<svg width="10" height="14" style="left:902.00px;top:290.00px"><path d="M1 1 L1 10.5 L3.3 8.4 L5 12 L6.6 11.3 L5 7.8 L8 7.8 Z" fill="#f4f4f4" stroke="#222" stroke-width="0.8" stroke-linejoin="round"/></svg>
</body></html>
